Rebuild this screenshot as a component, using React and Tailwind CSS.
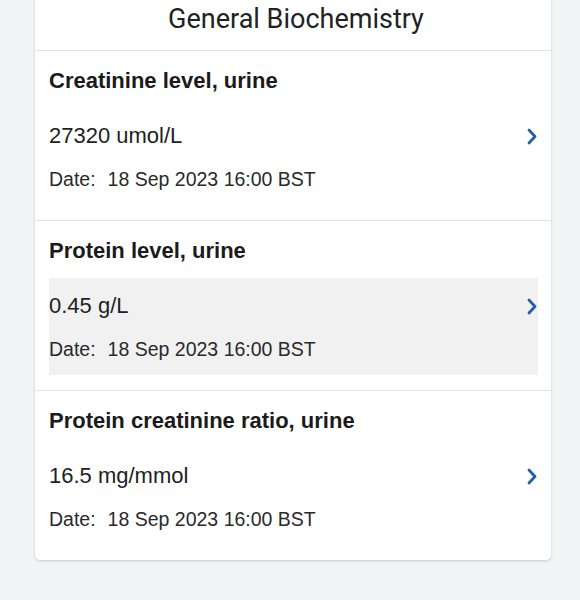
const results = [
  { id: 1, name: 'Creatinine level, urine', value: '27320 umol/L', date: '18 Sep 2023 16:00 BST' },
  { id: 2, name: 'Protein level, urine', value: '0.45 g/L', date: '18 Sep 2023 16:00 BST', active: true },
  { id: 3, name: 'Protein creatinine ratio, urine', value: '16.5 mg/mmol', date: '18 Sep 2023 16:00 BST' },
];

function Chevron() {
  return (
    <svg width="10" height="17" viewBox="0 0 10 17" className="shrink-0">
      <path d="M2 2 L8 8.5 L2 15" fill="none" stroke="#2361a6" strokeWidth="2.8" strokeLinecap="round" strokeLinejoin="round" />
    </svg>
  );
}

function ResultRow({ result }) {
  return (
    <div className="border-t border-[#e3e3e6] pl-[14px] pr-[13px] pt-[17px] pb-[15px]">
      <h3 className="text-[22px] leading-[26px] font-bold text-[#1b1b1b] mb-[14px]">{result.name}</h3>
      <div className={`pt-[15px] pb-[14px] pr-[1px] ${result.active ? 'bg-[#f1f1f2]' : ''}`}>
        <div className="flex items-center justify-between">
          <p className="text-[22px] leading-[26px] text-[#222]">{result.value}</p>
          <Chevron />
        </div>
        <p className="text-[19.5px] leading-[24px] text-[#2a2a2a] mt-[18px]">
          <span className="mr-[12px]">Date:</span>
          {result.date}
        </p>
      </div>
    </div>
  );
}

export default function App() {
  return (
    <div className="min-h-[600px] bg-[#f3f4f6] pl-[35px] pr-[29px] pb-[40px]" style={{ fontFamily: '"Liberation Sans", Arial, sans-serif' }}>
      <div className="bg-white rounded-b-[5px] shadow-[0_1px_3px_rgba(0,0,0,0.18)]">
        <div className="h-[50px] flex items-start justify-center pt-[2px] pl-[6px]">
          <h2 className="text-[27px] leading-[34px] text-[#222]" style={{ fontFamily: 'Roboto, sans-serif' }}>
            General Biochemistry
          </h2>
        </div>
        {results.map((r) => (
          <ResultRow key={r.id} result={r} />
        ))}
      </div>
    </div>
  );
}
